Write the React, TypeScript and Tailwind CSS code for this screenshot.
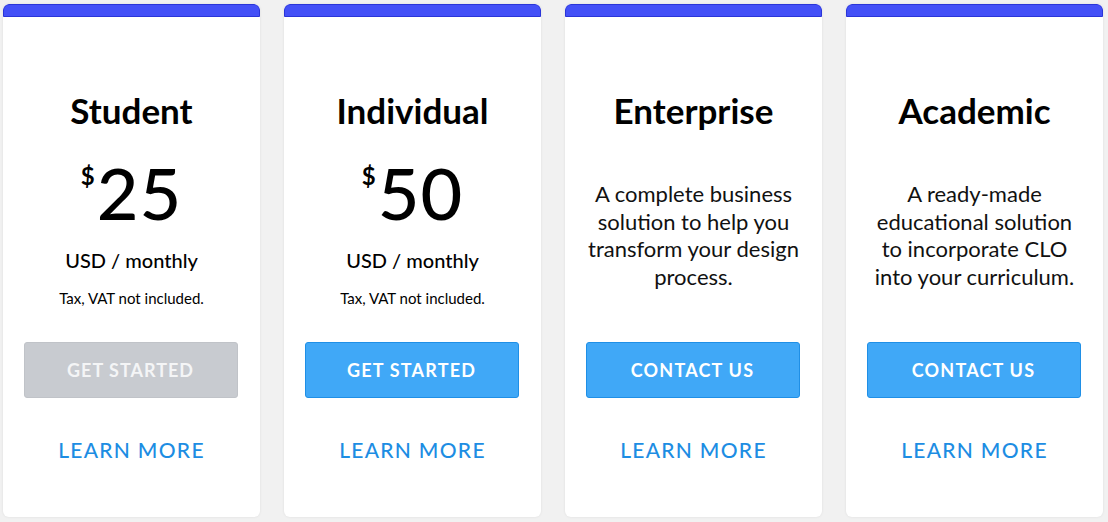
import React from "react";

type Plan = {
  name: string;
  price?: string;
  desc?: string[];
  button: string;
  disabled?: boolean;
};

const plans: Plan[] = [
  { name: "Student", price: "25", button: "GET STARTED", disabled: true },
  { name: "Individual", price: "50", button: "GET STARTED" },
  {
    name: "Enterprise",
    desc: ["A complete business", "solution to help you", "transform your design", "process."],
    button: "CONTACT US",
  },
  {
    name: "Academic",
    desc: ["A ready-made", "educational solution", "to incorporate CLO", "into your curriculum."],
    button: "CONTACT US",
  },
];

function Card({ plan }: { plan: Plan }) {
  return (
    <div className="flex w-[257px] flex-col items-center overflow-hidden rounded-[6px] bg-white shadow-[0_0_3px_rgba(0,0,0,0.08)]">
      <div className="h-[13px] w-full rounded-t-[6px] border border-[#2a35d8] bg-[#4350f7]" />
      <div className="flex h-[325px] w-full flex-col items-center">
        <div className="mt-[73px] text-[35px] font-bold leading-[40px] text-black">{plan.name}</div>
        {plan.price ? (
          <>
            <div className="mt-[26px] flex items-start text-black">
              <span className="mt-[8px] mr-[2px] text-[24px] font-bold leading-[24px]">$</span>
              <span className="text-[72px] font-medium leading-[72px] tracking-[1px]">{plan.price}</span>
            </div>
            <div className="mt-[20px] text-[20px] font-medium leading-[24px] text-black">USD / monthly</div>
            <div className="mt-[17px] text-[15px] leading-[18px] text-black">Tax, VAT not included.</div>
          </>
        ) : (
          <div className="mt-[50px] flex flex-col items-center text-[22px] leading-[27.5px] text-[#111]">
            {plan.desc!.map((l) => (
              <div key={l}>{l}</div>
            ))}
          </div>
        )}
      </div>
      <button
        className={
          plan.disabled
            ? "-ml-[2px] flex h-[56px] w-[214px] items-center justify-center rounded-[3px] border border-[#c0c3c8] bg-[#c8cbd0] text-[18px] font-bold tracking-[1px] text-[#f4f5f6]"
            : "-ml-[2px] flex h-[56px] w-[214px] items-center justify-center rounded-[3px] border border-[#1f8fe6] bg-[#40a8f7] text-[18px] font-bold tracking-[1.2px] text-white"
        }
      >
        {plan.button}
      </button>
      <div className="mt-[40px] text-[21px] font-medium leading-[24px] tracking-[1.3px] text-[#1d8de3]">LEARN MORE</div>
    </div>
  );
}

export default function App() {
  return (
    <div
      className="flex h-[522px] w-[1108px] items-start gap-[24px] bg-[#f1f1f1] pl-[3px] pt-[4px]"
      style={{ fontFamily: "Lato, 'Noto Sans', sans-serif" }}
    >
      {plans.map((p) => (
        <div key={p.name} className="flex h-[513px]">
          <Card plan={p} />
        </div>
      ))}
    </div>
  );
}
